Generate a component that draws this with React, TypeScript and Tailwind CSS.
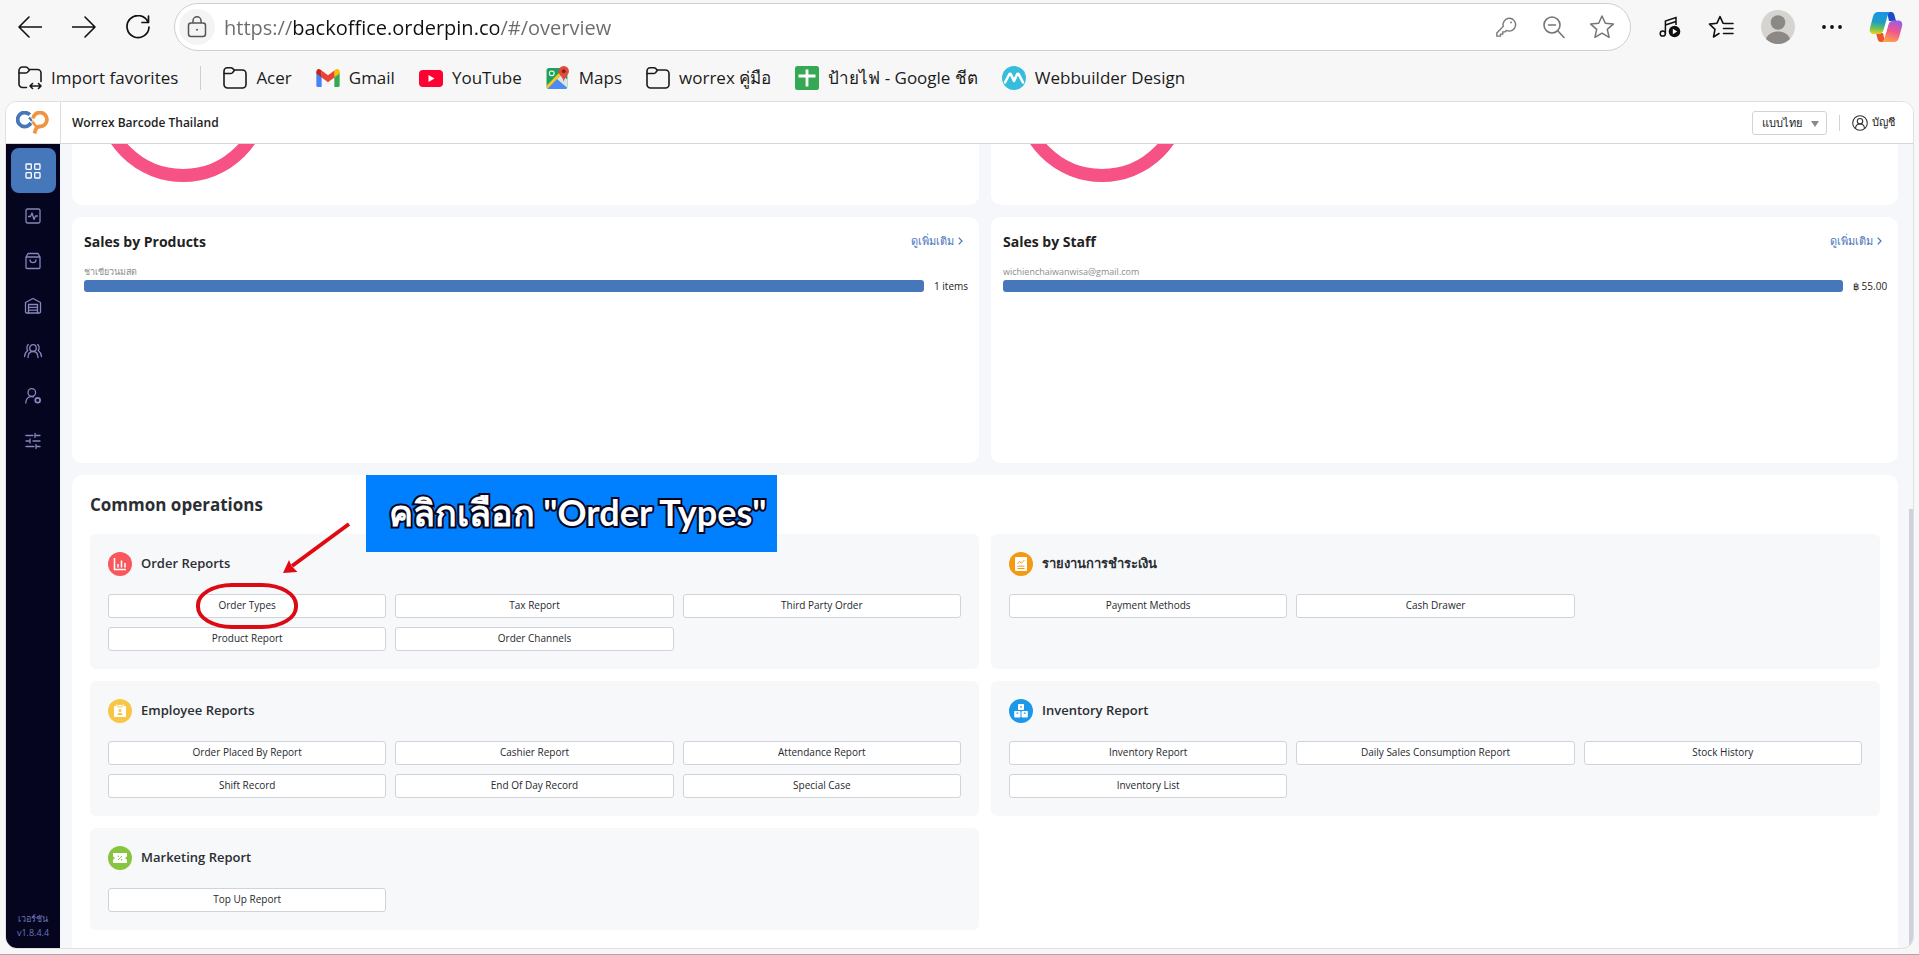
import React, { useState } from 'react';

type IconProps = { className?: string };

interface ReportGroup {
  title: string;
  icon: React.ReactNode;
  items: string[];
}

const FolderIcon: React.FC<{ arrows?: boolean }> = ({ arrows }) => (
  <svg width="24" height="24" viewBox="0 0 24 24" fill="none" stroke="#1b1b1b" strokeWidth="1.6" strokeLinecap="round" strokeLinejoin="round">
    {arrows ? (
      <>
        <path d="M8.5 21.5H4.5a3.5 3.5 0 0 1-3.5-3.5V4.5A3.5 3.5 0 0 1 4.500 1H7.500c.8 0 1.500.3 2 .8l1.700 1.700H19.500A3.500 3.500 0 0 1 23 7v8.500" />
        <path d="M1 7h6.500c.8 0 1.500-.3 2-.8l1.900-2" />
        <path d="M12 20h11M14.500 17.500L12 20l2.500 2.500M20.500 17.500L23 20l-2.500 2.500" />
      </>
    ) : (
      <>
        <path d="M1 5a3.200 3.200 0 0 1 3.200-3.200h3.600c.8 0 1.500.3 2 .8l1.400 1.400h8.300A3.500 3.500 0 0 1 23 7.500v11a3.500 3.500 0 0 1-3.500 3.500h-15A3.500 3.500 0 0 1 1 18.500z" />
        <path d="M1 7.500h6.500c.8 0 1.500-.3 2-.8l1.800-2.200" />
      </>
    )}
  </svg>
);

const GmailIcon = () => (
  <svg width="24" height="18" viewBox="0 0 22 17">
    <path d="M0 2.500V15.500A1.500 1.500 0 0 0 1.500 17H5V6z" fill="#4285f4" />
    <path d="M22 2.500V15.500a1.500 1.500 0 0 1-1.500 1.500H17V6z" fill="#34a853" />
    <path d="M17 1.500V8l5-3.800V2.500c0-2.200-2.400-3.200-4-2z" fill="#fbbc04" />
    <path d="M0 2.500v1.700L5 8V1.500L4 .7C2.300-.7 0 .4 0 2.500z" fill="#c5221f" />
    <path d="M5 1.500V8l6 4.500L17 8V1.500L11 6z" fill="#ea4335" />
  </svg>
);

const YoutubeIcon = () => (
  <svg width="24" height="17" viewBox="0 0 24 17">
    <rect width="24" height="17" rx="4" fill="#ff0033" />
    <path d="M9.500 5v7l6-3.500z" fill="#fff" />
  </svg>
);

const MapsIcon = () => (
  <svg width="24" height="24" viewBox="0 0 22 23">
    <rect x="0" y="2" width="20" height="20" rx="2.500" fill="#1da25a" />
    <path d="M1 21L10 12.500l9.500 8.500c-.3.700-1 1-1.500 1H2.500C1.700 22 1 21.700 1 21z" fill="#4c8bf5" />
    <path d="M10 12.500l4-4 6 4.500v8z" fill="#dfe3ea" />
    <path d="M0 19L13.500 5l1.800 2.200L1.200 21.500C.5 21 0 20.300 0 19z" fill="#fbc52d" />
    <circle cx="5" cy="7" r="2.300" fill="none" stroke="#fff" strokeWidth="1" />
    <path d="M16.500 0a5 5 0 0 0-5 5c0 3.500 4 5 5 10 1-5 5-6.500 5-10a5 5 0 0 0-5-5z" fill="#e04a3f" />
    <circle cx="16.500" cy="5" r="1.800" fill="#8a1c16" />
  </svg>
);

const SheetsIcon = () => (
  <svg width="24" height="24" viewBox="0 0 24 24">
    <rect width="24" height="24" rx="2.500" fill="#34a853" />
    <path d="M12 3.500V20.500M3.500 10h17" stroke="#fff" strokeWidth="2.800" fill="none" />
  </svg>
);

const WebbuilderIcon = () => (
  <svg width="24" height="24" viewBox="0 0 24 24">
    <circle cx="12" cy="12" r="12" fill="#35bddb" />
    <path d="M3 16.500L7.200 8.500c.5-1 1.300-1 1.800 0L12 15l3-6.500c.5-1 1.300-1 1.800 0l4.200 8" fill="none" stroke="#fff" strokeWidth="2.600" strokeLinejoin="round" strokeLinecap="round" />
  </svg>
);

const CopilotIcon = () => (
  <svg width="34" height="32" viewBox="0 0 34 32">
    <defs>
      <linearGradient id="cpLeft" x1="0.300" y1="0" x2="0.200" y2="1">
        <stop offset="0" stopColor="#1a93e8" />
        <stop offset="0.450" stopColor="#1f9fc4" />
        <stop offset="0.700" stopColor="#5fbf5a" />
        <stop offset="1" stopColor="#f0d11c" />
      </linearGradient>
      <linearGradient id="cpRight" x1="0.700" y1="0" x2="0.400" y2="1">
        <stop offset="0" stopColor="#9a5be8" />
        <stop offset="0.500" stopColor="#f0568d" />
        <stop offset="1" stopColor="#ffa04a" />
      </linearGradient>
    </defs>
    <path d="M18 1h4c2 0 2.800 1 3.400 3l1.600 6h-7z" fill="#1c4bc9" />
    <path d="M16 31h-4c-2 0-2.800-1-3.400-3L7 22h7z" fill="#e8572c" />
    <path d="M9 1h12c-1.500 1-2.300 3-3 5.500l-3 11C14 21 13 23 10 23H5c-3.500 0-5-2.500-4-6L4 5.500C4.900 2.500 6.500 1 9 1z" fill="url(#cpLeft)" />
    <path d="M25 31H13c1.500-1 2.300-3 3-5.500l3-11C20 11 21 9.500 24 9.500h5c3.500 0 5 2.500 4 6l-3 11c-.9 3-2.500 4.500-5 4.500z" fill="url(#cpRight)" />
    <path d="M18 10h4.500c-2 .8-2.800 2.500-3.400 4.500L17 22h-4.500c1.300-.8 2-2.200 2.500-3.500z" fill="#fff" />
  </svg>
);

const Logo = () => (
  <svg width="34" height="23" viewBox="0 0 34 23" fill="none" strokeWidth="3.800">
    <path d="M13.800 3.800A7 7 0 1 0 13.300 13.800L15 12" stroke="#4777bb" />
    <path d="M13 6.500l3 3.500" stroke="#4777bb" strokeWidth="2" />
    <path d="M17 7.500A7 7 0 1 1 24 15.500C20.500 15.600 20 17 18.500 22.500" stroke="#ef9440" />
    <path d="M16.500 10.500l3.500 5" stroke="#ef9440" strokeWidth="2.500" />
  </svg>
);

const navIcons: { label: string; shape: React.ReactNode }[] = [
  {
    label: 'Overview',
    shape: (
      <>
        <rect x="1" y="1" width="5.300" height="5.300" rx="0.800" />
        <rect x="9.700" y="1" width="5.300" height="5.300" rx="0.800" />
        <rect x="1" y="9.700" width="5.300" height="5.300" rx="0.800" />
        <rect x="9.700" y="9.700" width="5.300" height="5.300" rx="0.800" />
      </>
    ),
  },
  {
    label: 'Reports',
    shape: (
      <>
        <rect x="1" y="1" width="14" height="14" rx="1.500" />
        <path d="M3.500 8.500H5.500L7 5l2 6.500 1.500-3.500h2" />
      </>
    ),
  },
  {
    label: 'Products',
    shape: (
      <>
        <path d="M1 4L3 .5h10L15 4v10.500a1 1 0 0 1-1 1H2a1 1 0 0 1-1-1zM1 4h14" />
        <path d="M5 7c.3 3.600 5.700 3.600 6 0" />
      </>
    ),
  },
  {
    label: 'Inventory',
    shape: (
      <>
        <path d="M2 15h-.2A1.200 1.200 0 0 1 .5 13.800V4.500L8 .5l7.500 4v9.300a1.200 1.200 0 0 1-1.300 1.200z" />
        <path d="M3.500 15V6.500h9V15M3.500 9.300h9M3.500 12.200h9" />
      </>
    ),
  },
  {
    label: 'Customers',
    shape: (
      <>
        <circle cx="8" cy="5" r="3.300" />
        <path d="M3 14.500c0-3.600 2-6 5-6s5 2.400 5 6M3.300 1.500C1.500 3 1.500 6 2.800 7.500 .5 9-.2 11-.5 13.500M12.700 1.500C14.500 3 14.500 6 13.200 7.500 15.500 9 16.200 11 16.500 13.500" />
      </>
    ),
  },
  {
    label: 'Staff',
    shape: (
      <>
        <circle cx="6.800" cy="4.500" r="3.800" />
        <path d="M.8 15c0-4 2.400-6.500 6-6.500.7 0 1.300.1 1.800.3" />
        <circle cx="12.700" cy="12.300" r="2.400" strokeWidth="1.800" />
      </>
    ),
  },
  {
    label: 'Settings',
    shape: <path d="M1 2.500h7M10 .5v4M10 2.500h5M1 8h4M5 6v4M8 8h7M1 13.500h8M11 11.500v4M11 13.500h4" />,
  },
];

const groups: ReportGroup[] = [
  {
    title: 'Order Reports',
    icon: (
      <svg width="24" height="24" viewBox="0 0 24 24">
        <circle cx="12" cy="12" r="12" fill="#f8585b" />
        <path d="M6.500 6v11.500H18M10 12v3.500M13.500 8.500v7M17 11v4.500" stroke="#fff" strokeWidth="1.600" fill="none" />
      </svg>
    ),
    items: ['Order Types', 'Tax Report', 'Third Party Order', 'Product Report', 'Order Channels'],
  },
  {
    title: 'รายงานการชำระเงิน',
    icon: (
      <svg width="24" height="24" viewBox="0 0 24 24">
        <circle cx="12" cy="12" r="12" fill="#f39a12" />
        <rect x="6" y="5" width="12" height="14" rx="1" fill="#fff" />
        <path d="M8.500 12l2-2.500 2 1.500 3-3M8.500 14.200h7M8.500 16.500h7" stroke="#f39a12" strokeWidth="1" fill="none" />
      </svg>
    ),
    items: ['Payment Methods', 'Cash Drawer'],
  },
  {
    title: 'Employee Reports',
    icon: (
      <svg width="24" height="24" viewBox="0 0 24 24">
        <circle cx="12" cy="12" r="12" fill="#f7c644" />
        <rect x="6" y="7" width="12" height="11" rx="1" fill="#fff" />
        <path d="M9 5.500v3M15 5.500v3" stroke="#fff" strokeWidth="1.500" />
        <rect x="10" y="5.500" width="4" height="2.500" fill="#fff" stroke="#f7c644" strokeWidth="0.800" />
        <circle cx="12" cy="11.500" r="1.500" fill="#f7c644" />
        <path d="M9.500 16c0-3 5-3 5 0z" fill="#f7c644" />
      </svg>
    ),
    items: ['Order Placed By Report', 'Cashier Report', 'Attendance Report', 'Shift Record', 'End Of Day Record', 'Special Case'],
  },
  {
    title: 'Inventory Report',
    icon: (
      <svg width="24" height="24" viewBox="0 0 24 24">
        <circle cx="12" cy="12" r="12" fill="#1b98e8" />
        <rect x="9" y="5" width="6" height="6" rx="0.800" fill="#fff" />
        <rect x="5.200" y="12" width="6.300" height="6.500" rx="0.800" fill="#fff" />
        <rect x="12.500" y="12" width="6.300" height="6.500" rx="0.800" fill="#fff" />
        <path d="M11.200 7.800h1.600M7.500 14.200h1.800M14.800 14.200h1.800" stroke="#1b98e8" strokeWidth="1.200" />
      </svg>
    ),
    items: ['Inventory Report', 'Daily Sales Consumption Report', 'Stock History', 'Inventory List'],
  },
  {
    title: 'Marketing Report',
    icon: (
      <svg width="24" height="24" viewBox="0 0 24 24">
        <circle cx="12" cy="12" r="12" fill="#87c540" />
        <path d="M5 7h14v3.500a1.500 1.500 0 0 0 0 3V17H5v-3.500a1.500 1.500 0 0 0 0-3z" fill="#fff" />
        <path d="M10 14l4-4" stroke="#87c540" strokeWidth="1" />
        <circle cx="10.300" cy="10.300" r="0.800" fill="#87c540" />
        <circle cx="13.700" cy="13.700" r="0.800" fill="#87c540" />
      </svg>
    ),
    items: ['Top Up Report'],
  },
];

const bookmarks: { label: string; icon: React.ReactNode }[] = [
  { label: 'Acer', icon: <FolderIcon /> },
  { label: 'Gmail', icon: <GmailIcon /> },
  { label: 'YouTube', icon: <YoutubeIcon /> },
  { label: 'Maps', icon: <MapsIcon /> },
  { label: 'worrex คู่มือ', icon: <FolderIcon /> },
  { label: 'ป้ายไฟ - Google ชีต', icon: <SheetsIcon /> },
  { label: 'Webbuilder Design', icon: <WebbuilderIcon /> },
];

const Star: React.FC<IconProps> = ({ className }) => (
  <svg className={className} width="26" height="26" viewBox="0 0 26 26" fill="none" stroke="currentColor" strokeWidth="1.500" strokeLinejoin="round">
    <path d="M13 2l3.300 7.300 8 .8-6 5.300 1.800 7.900-7.100-4.100-7.100 4.100 1.800-7.900-6-5.300 8-.8z" />
  </svg>
);

const BrowserBar: React.FC = () => {
  const [url, setUrl] = useState('https://backoffice.orderpin.co/#/overview');

  return (
    <div className="flex items-center pt-[3px] pl-[18px] pr-4">
      <div className="flex gap-[30px] mr-6">
        <button aria-label="Back">
          <svg width="24" height="24" viewBox="0 0 24 24" fill="none" stroke="#111" strokeWidth="1.600" strokeLinecap="round" strokeLinejoin="round">
            <path d="M23.500 12H1M11 2L1 12l10 10" />
          </svg>
        </button>
        <button aria-label="Forward">
          <svg width="24" height="24" viewBox="0 0 24 24" fill="none" stroke="#111" strokeWidth="1.600" strokeLinecap="round" strokeLinejoin="round">
            <path d="M.5 12H23M13 2l10 10-10 10" />
          </svg>
        </button>
        <button aria-label="Refresh">
          <svg width="24" height="24" viewBox="0 0 24 24" fill="none" stroke="#111" strokeWidth="1.700" strokeLinecap="round" strokeLinejoin="round">
            <path d="M22 7A11 11 0 1 0 23 12M22.500 1v6.500H16" />
          </svg>
        </button>
      </div>

      <div className="flex flex-1 items-center h-12 rounded-full bg-white border border-[#cfcfcf] pl-1 pr-[15px]">
        <span className="flex items-center justify-center size-9 rounded-full bg-[#f4f4f4]">
          <svg width="20" height="22" viewBox="0 0 20 22" fill="none" stroke="#555" strokeWidth="1.500">
            <rect x="1.500" y="7" width="17" height="13.500" rx="2.500" />
            <path d="M6 7V4.800a4 4 0 0 1 8 0V7" />
            <circle cx="10" cy="13.700" r="1" fill="#555" stroke="none" />
          </svg>
        </span>
        <input
          aria-label="Address"
          value={url}
          onChange={(e) => setUrl(e.target.value)}
          className="flex-1 ml-[9px] h-9 text-xl outline-none text-transparent bg-clip-text caret-black bg-[linear-gradient(to_right,#6b6b6b_69px,#111_69px,#111_275px,#6b6b6b_275px)]"
        />
        <div className="flex items-center gap-6 text-[#757575]">
          <button aria-label="Saved passwords">
            <svg width="22" height="22" viewBox="0 0 24 24" fill="none" stroke="currentColor" strokeWidth="1.500" strokeLinejoin="round">
              <path d="M15 2.500a7 7 0 1 1-2.500 13.300L11 17.300H8.500v2.500H6V22H2v-3.500l7-7.200A7 7 0 0 1 15 2.500z" />
              <circle cx="17.500" cy="7" r="1" fill="currentColor" stroke="none" />
            </svg>
          </button>
          <button aria-label="Zoom out">
            <svg width="24" height="24" viewBox="0 0 24 24" fill="none" stroke="currentColor" strokeWidth="1.600" strokeLinecap="round">
              <circle cx="11" cy="10" r="8" />
              <path d="M17 16l6 6.500M7.500 10h7" />
            </svg>
          </button>
          <button aria-label="Add to favorites">
            <Star />
          </button>
        </div>
      </div>

      <div className="flex items-center justify-between w-[244px] ml-7 text-[#111]">
        <button aria-label="Media">
          <svg width="22" height="22" viewBox="0 0 22 22" fill="none" stroke="currentColor" strokeWidth="1.500">
            <circle cx="3.800" cy="17.500" r="2.600" />
            <path d="M6.400 17.500V5l10.600-3.500V9M6.400 9L17 5.500" />
            <circle cx="15.500" cy="15.500" r="5.800" fill="#111" stroke="none" />
            <path d="M13.800 12.800v5.400l4.400-2.700z" fill="#fff" stroke="none" />
          </svg>
        </button>
        <button aria-label="Favorites">
          <svg width="26" height="24" viewBox="0 0 26 24" fill="none" stroke="currentColor" strokeWidth="1.600" strokeLinejoin="round" strokeLinecap="round">
            <path d="M17 8.500l-2-.3L12 1.500 9 8.200l-7.500.9L7 14.300 5.500 22l5.500-3.500M17.500 8.500H25M15.500 13.500H25M15.500 18.500H25" />
          </svg>
        </button>
        <button aria-label="Profile">
          <svg width="34" height="34" viewBox="0 0 34 34">
            <circle cx="17" cy="17" r="17" fill="#d5d4d1" />
            <circle cx="17" cy="12.500" r="7.300" fill="#8b8885" />
            <path d="M5 29C8 19 26 19 29 29a17 17 0 0 1-24 0z" fill="#8b8885" />
          </svg>
        </button>
        <button aria-label="More">
          <svg width="20" height="6" viewBox="0 0 20 6" fill="#111">
            <circle cx="2" cy="3" r="1.900" />
            <circle cx="10" cy="3" r="1.900" />
            <circle cx="18" cy="3" r="1.900" />
          </svg>
        </button>
        <button aria-label="Copilot">
          <CopilotIcon />
        </button>
      </div>
    </div>
  );
};

const BookmarksBar = () => (
  <nav className="flex items-center h-[50px] pt-1 pl-[18px] text-[17px] text-[#1b1b1b] whitespace-nowrap">
    <button className="flex items-center gap-[9px]">
      <FolderIcon arrows />
      Import favorites
    </button>
    <span className="w-px h-6 bg-[#cfcfcf] mx-[22px]" />
    <div className="flex items-center gap-6">
      {bookmarks.map((b) => (
        <a key={b.label} href="#bookmark" className="flex items-center gap-[9px]">
          {b.icon}
          {b.label}
        </a>
      ))}
    </div>
  </nav>
);

const Donut = () => (
  <svg className="shrink-0" width="174" height="174" viewBox="0 0 174 174">
    <circle cx="87" cy="87" r="80.500" fill="none" stroke="#f75285" strokeWidth="13" />
  </svg>
);

const SalesCard: React.FC<{ title: string; name: string; value: string }> = ({ title, name, value }) => (
  <section className="bg-white rounded-[10px] h-[246px] p-3">
    <div className="flex items-center justify-between h-6 pr-1">
      <h2 className="text-[14px] font-bold text-[#222]">{title}</h2>
      <a href="#more" className="flex items-center gap-1 text-[11px] text-[#4777bb]">
        ดูเพิ่มเติม
        <svg width="5" height="8" viewBox="0 0 5 8" fill="none" stroke="currentColor" strokeWidth="1.200">
          <path d="M.7.7L4 4 .7 7.300" />
        </svg>
      </a>
    </div>
    <p className="mt-[13px] h-3.5 text-[9px] leading-3 text-[#8c8c8c]">{name}</p>
    <div className="flex items-center gap-2.5 h-3">
      <div className="flex-1 h-3 rounded-[3px] bg-[#4777bb]" />
      <span className="w-[33px] text-[10px] text-[#222] whitespace-nowrap">{value}</span>
    </div>
  </section>
);

const ReportPanel: React.FC<{ group: ReportGroup; highlighted: string }> = ({ group, highlighted }) => (
  <section className="bg-[#f6f8fa] rounded-md p-[18px]">
    <h3 className="flex items-center gap-[9px] h-6 text-[13px] font-semibold text-[#2b2e33]">
      {group.icon}
      {group.title}
    </h3>
    <div className="grid grid-cols-3 gap-[9px] mt-[18px]">
      {group.items.map((item) => (
        <button key={item} className="relative h-6 pb-0.5 bg-white border border-[#d0d4da] rounded-[3px] text-[10px] leading-5 text-[#26282c]">
          {item}
          {item === highlighted && (
            <span className="absolute z-10 left-1/2 top-1/2 -translate-x-1/2 -translate-y-1/2 w-[102px] h-[46px] border-4 border-[#dc0a14] rounded-[36px/22px]" />
          )}
        </button>
      ))}
    </div>
  </section>
);

export default function App() {
  const [language, setLanguage] = useState('th');
  const [active, setActive] = useState('Overview');

  return (
    <div className="min-h-screen flex flex-col bg-[#f7f7f7] border-b border-[#a9a9ad] font-['Open_Sans','Noto_Sans',sans-serif]">
      <BrowserBar />
      <BookmarksBar />

      <div className="relative flex flex-1 flex-col mx-[5px] mb-[5px] rounded-[12px] border border-[#e0e0e2] bg-[#f5f7fa] overflow-hidden">
        <header className="flex items-center h-[42px] bg-white border-b border-[#d6d7da] pr-[18px]">
          <div className="flex items-center justify-center w-[55px] h-full border-r border-[#dcdde0]">
            <Logo />
          </div>
          <h1 className="flex-1 ml-[11px] text-[12px] font-semibold text-[#222]">Worrex Barcode Thailand</h1>
          <div className="relative">
            <select
              aria-label="Language"
              value={language}
              onChange={(e) => setLanguage(e.target.value)}
              className="appearance-none block w-[75px] h-6 pl-[9px] text-[11px] leading-5 text-[#222] bg-white border border-[#d0d4da] rounded-[3px]"
            >
              <option value="th">แบบไทย</option>
              <option value="en">English</option>
            </select>
            <svg className="absolute right-2 top-2.5 pointer-events-none" width="8" height="6" viewBox="0 0 8 6" fill="#8a8a8a">
              <path d="M0 0h8L4 6z" />
            </svg>
          </div>
          <span className="w-px h-4 bg-[#d0d4da] mx-3" />
          <button className="flex items-center gap-1 text-[11px] text-[#222]">
            <svg width="16" height="16" viewBox="0 0 16 16" fill="none" stroke="#333" strokeWidth="1.100">
              <circle cx="8" cy="8" r="7.300" />
              <circle cx="8" cy="6.200" r="2.700" />
              <path d="M3.500 13.500c.3-6 8.700-6 9 0" />
            </svg>
            บัญชี
          </button>
        </header>

        <div className="flex flex-1">
          <aside className="flex flex-col items-center w-[54px] shrink-0 bg-[#05051f] pt-1 pb-2">
            {navIcons.map((n) => (
              <button
                key={n.label}
                aria-label={n.label}
                onClick={() => setActive(n.label)}
                className={`flex items-center justify-center size-[45px] rounded-lg ${active === n.label ? 'bg-[#4777bb] text-white' : 'text-[#8587bd]'}`}
              >
                <svg width="16" height="16" viewBox="0 0 16 16" fill="none" stroke="currentColor" strokeWidth="1.300" strokeLinecap="round" strokeLinejoin="round" overflow="visible">
                  {n.shape}
                </svg>
              </button>
            ))}
            <p className="mt-auto text-center text-[9px] leading-[14px] text-[#6c74b4]">
              เวอร์ชัน
              <br />
              v1.8.4.4
            </p>
          </aside>

          <main className="flex flex-1 flex-col gap-3 pl-3 pr-[15px]">
            <div className="grid grid-cols-2 gap-3">
              <section className="flex items-end h-[61px] pl-6 pb-[23px] bg-white rounded-b-[10px] overflow-hidden">
                <Donut />
              </section>
              <section className="flex items-end h-[61px] pl-6 pb-[23px] bg-white rounded-b-[10px] overflow-hidden">
                <Donut />
              </section>
              <SalesCard title="Sales by Products" name="ชาเขียวนมสด" value="1 items" />
              <SalesCard title="Sales by Staff" name="wichienchaiwanwisa@gmail.com" value="฿ 55.00" />
            </div>

            <section className="relative flex-1 bg-white rounded-t-[10px] px-[18px] pb-[18px]">
              <h2 className="flex items-center h-[59px] text-[17px] font-bold text-[#2b2e33]">Common operations</h2>
              <div className="grid grid-cols-2 gap-3">
                {groups.map((g) => (
                  <ReportPanel key={g.title} group={g} highlighted="Order Types" />
                ))}
              </div>

              {/* Step callout */}
              <div className="absolute left-[294px] top-0 flex items-center justify-center w-[411px] h-[77px] pl-3 pb-1 bg-[#0080ff] text-[36px] leading-none font-bold text-white whitespace-nowrap font-['Lato','Noto_Sans',sans-serif] [-webkit-text-stroke:4px_#05051f] [paint-order:stroke_fill]">
                คลิกเลือก "Order Types"
              </div>
              <svg className="absolute left-[208px] top-[46px]" width="72" height="56" viewBox="0 0 72 56">
                <path d="M69 3L12 45" stroke="#e20a12" strokeWidth="4" />
                <path d="M3 52l6-13 2.500 6 6 6z" fill="#e20a12" />
              </svg>
            </section>
          </main>
        </div>

        {/* Scroll thumb */}
        <span className="absolute right-0 top-[407px] bottom-0 w-1 bg-[#cdd1da]" />
      </div>
    </div>
  );
}
